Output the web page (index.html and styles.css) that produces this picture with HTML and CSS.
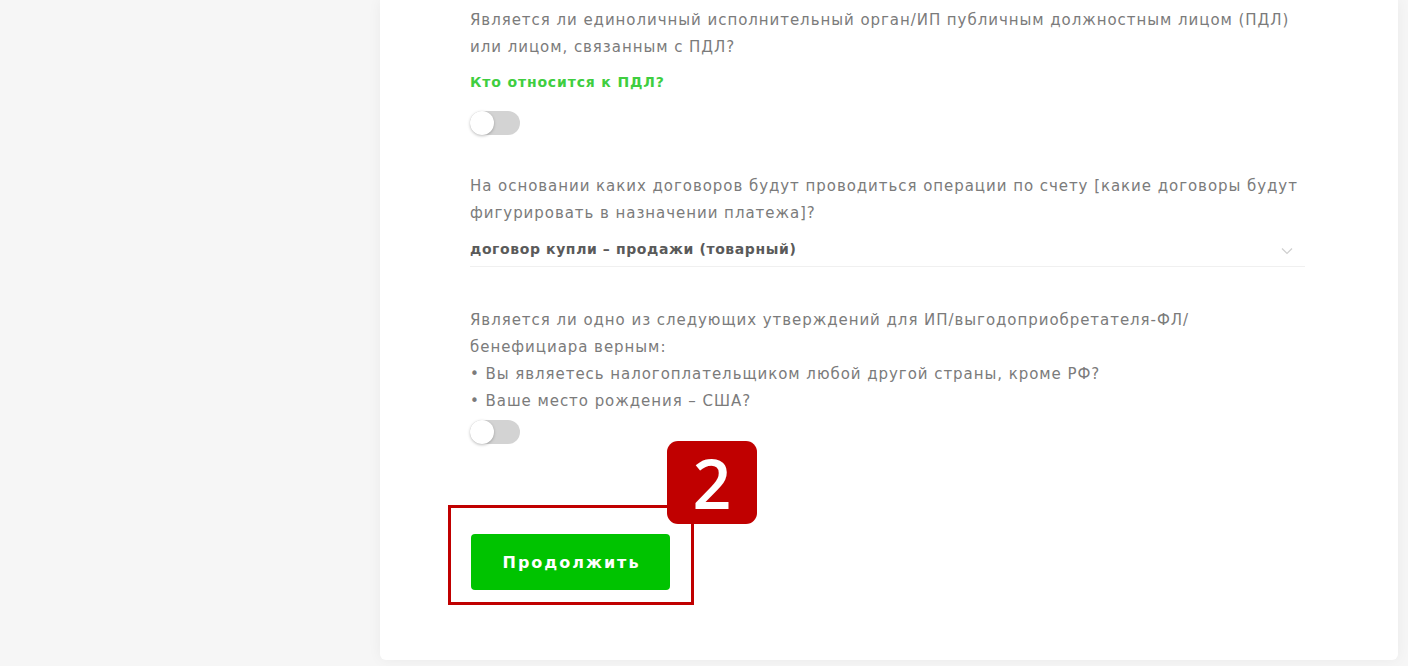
FILE: index.html
```html
<!DOCTYPE html>
<html lang="ru">
<head>
<meta charset="utf-8">
<link rel="stylesheet" href="styles.css">
</head>
<body>
<div class="page">
  <div class="aside"></div>
  <main class="card">
    <section class="field">
      <p class="q">Является ли единоличный исполнительный орган/ИП публичным должностным лицом (ПДЛ)<br>или лицом, связанным с ПДЛ?</p>
      <a class="link">Кто относится к ПДЛ?</a>
      <span class="toggle toggle-1"><span class="knob"></span></span>
    </section>
    <section class="field field-select">
      <p class="q">На основании каких договоров будут проводиться операции по счету [какие договоры будут<br>фигурировать в назначении платежа]?</p>
      <div class="select">
        <span class="value">договор купли – продажи (товарный)</span>
        <svg class="chev" width="12" height="8" viewBox="0 0 12 8"><path d="M1 1.5 L6 6.5 L11 1.5" fill="none" stroke="#cfcfcf" stroke-width="1.2"/></svg>
      </div>
    </section>
    <section class="field field-last">
      <p class="q">Является ли одно из следующих утверждений для ИП/выгодоприобретателя-ФЛ/<br>бенефициара верным:<br>• Вы являетесь налогоплательщиком любой другой страны, кроме РФ?<br>• Ваше место рождения – США?</p>
      <span class="toggle toggle-3"><span class="knob"></span></span>
    </section>
    <div class="actions">
      <button class="btn">Продолжить</button>
      <span class="mark"></span>
      <span class="badge">2</span>
    </div>
  </main>
</div>
</body>
</html>
```

FILE: styles.css
```css
html, body {
  margin: 0;
  padding: 0;
  background: #f6f6f6;
  height: 666px;
  overflow: hidden;
}
.page {
  display: flex;
  align-items: flex-start;
}
.aside {
  width: 380px;
  flex: none;
}
.card {
  width: 1018px;
  flex: none;
  box-sizing: border-box;
  height: 660px;
  background: #fff;
  border-radius: 0 0 6px 6px;
  box-shadow: 0 0 14px rgba(0,0,0,0.05);
  padding: 7px 93px 0 90px;
  font-family: "DejaVu Sans", "Noto Sans", sans-serif;
  font-size: 15px;
  color: #7b7b7b;
}
.q {
  margin: 0;
  line-height: 27px;
  letter-spacing: 0.95px;
  white-space: nowrap;
}
.link {
  display: block;
  margin-top: 8px;
  line-height: 27px;
  color: #3fce3f;
  font-weight: 700;
  font-size: 14px;
  letter-spacing: 0.85px;
}
.toggle {
  display: block;
  position: relative;
  width: 50px;
  height: 24px;
  border-radius: 12px;
  background: #d3d3d3;
}
.toggle-1 { margin-top: 15px; }
.toggle-3 { margin-top: 5px; }
.knob {
  position: absolute;
  left: 0;
  top: 0;
  width: 24px;
  height: 24px;
  border-radius: 50%;
  background: #fff;
  box-shadow: 0 1px 3px rgba(0,0,0,0.25);
}
.field-select { margin-top: 38px; }
.select {
  display: flex;
  align-items: center;
  justify-content: space-between;
  margin-top: 9px;
  padding-bottom: 3px;
  border-bottom: 1px solid #f0f0f0;
}
.value {
  line-height: 27px;
  font-weight: 700;
  font-size: 14px;
  color: #5a5a5a;
  letter-spacing: 0.6px;
}
.chev { margin-right: 12px; margin-top: 2px; }
.field-last { margin-top: 40px; }
.actions {
  position: relative;
  margin-top: 90px;
}
.btn {
  display: block;
  width: 199px;
  height: 56px;
  margin-left: 1px;
  padding: 0 0 0 2px;
  border: 0;
  border-radius: 4px;
  background: #00c300;
  color: #fff;
  font-family: "DejaVu Sans", "Noto Sans", sans-serif;
  font-size: 16px;
  font-weight: 700;
  letter-spacing: 2px;
}
.mark {
  position: absolute;
  left: -22px;
  top: -29px;
  width: 240px;
  height: 94px;
  border: 3px solid #c00000;
}
.badge {
  position: absolute;
  left: 197px;
  top: -93px;
  width: 90px;
  height: 83px;
  border-radius: 11px;
  background: #c00000;
  color: #fff;
  font-family: "Open Sans", sans-serif;
  font-weight: 600;
  font-size: 68px;
  line-height: 83px;
  text-align: center;
}
```
